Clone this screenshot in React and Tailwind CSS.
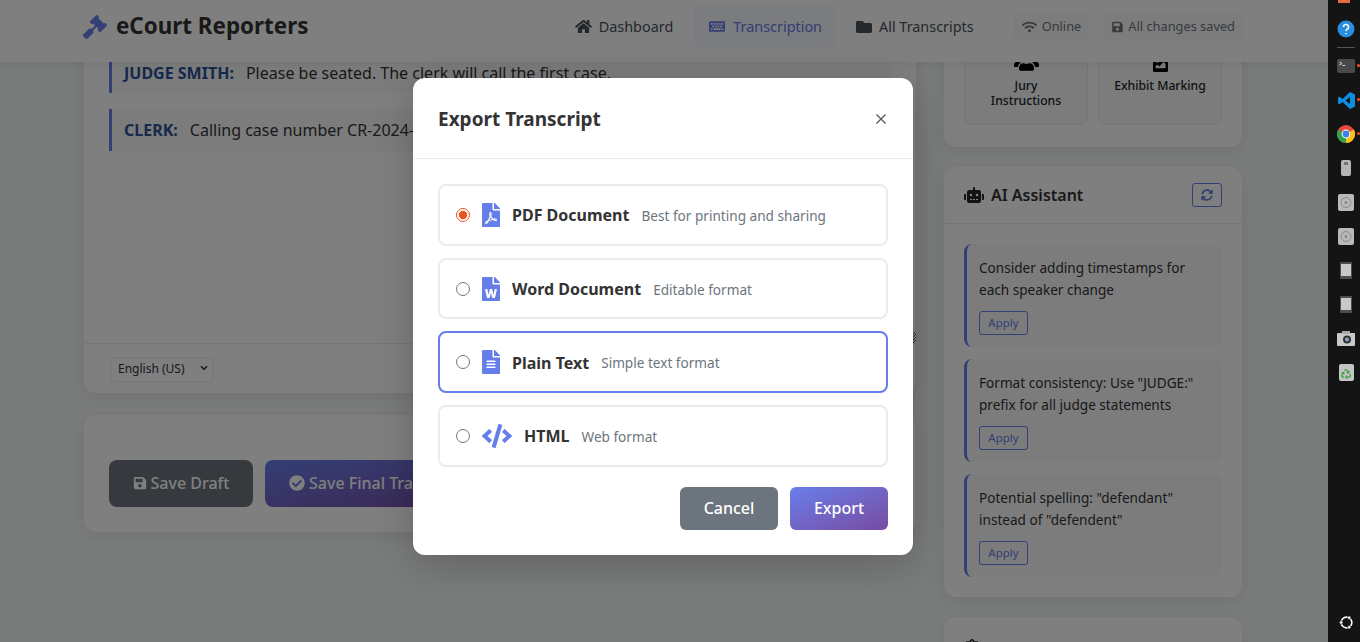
import {
  FaGavel, FaHome, FaKeyboard, FaFolder, FaWifi, FaSave, FaUsers, FaFileImage, FaRobot, FaSyncAlt,
  FaCheckCircle, FaFilePdf, FaFileWord, FaFileAlt, FaCode, FaClipboardCheck, FaRecycle,
} from 'react-icons/fa';

const suggestions = [
  ['Consider adding timestamps for', 'each speaker change'],
  ['Format consistency: Use "JUDGE:"', 'prefix for all judge statements'],
  ['Potential spelling: "defendant"', 'instead of "defendent"'],
];

const formats = [
  { id: 'pdf', icon: FaFilePdf, name: 'PDF Document', desc: 'Best for printing and sharing', checked: true },
  { id: 'word', icon: FaFileWord, name: 'Word Document', desc: 'Editable format' },
  { id: 'text', icon: FaFileAlt, name: 'Plain Text', desc: 'Simple text format', active: true },
  { id: 'html', icon: FaCode, name: 'HTML', desc: 'Web format', wide: true },
];

const Header = () => (
  <header className="relative z-10 h-[62px] shrink-0 bg-white shadow-[0_2px_10px_rgba(0,0,0,0.08)] pl-[83px] pr-[85px] pb-[9px] flex items-center">
    <FaGavel className="text-[#667eea] text-[24px] mr-[9px]" />
    <span className="text-[22.4px] leading-none font-bold text-[#333]">eCourt Reporters</span>
    <nav className="ml-auto flex items-center gap-[5px] text-[14.4px] text-[#495057]">
      <a className="h-[43px] px-[15px] mr-[1px] flex items-center gap-[7px] rounded-lg"><FaHome className="w-[17px] h-[15px]" />Dashboard</a>
      <a className="h-[43px] pl-[15px] pr-[14px] flex items-center gap-[8px] rounded-lg bg-[#667eea]/5 text-[#667eea]"><FaKeyboard className="w-[16px] h-[15px]" />Transcription</a>
      <a className="h-[43px] px-[15px] flex items-center gap-[7px] rounded-lg"><FaFolder className="w-[16px] h-[16px]" />All Transcripts</a>
    </nav>
    <div className="ml-[25px] flex items-center gap-[15px] text-[12.8px] text-[#6c757d]">
      <span className="h-[28px] px-[8px] flex items-center gap-[5px] rounded-md bg-[#f8f9fa]"><FaWifi className="w-[15px] h-[12px]" />Online</span>
      <span className="h-[28px] px-[8px] flex items-center gap-[5px] rounded-md bg-[#f8f9fa]"><FaSave className="w-[11px] h-[12px]" />All changes saved</span>
    </div>
  </header>
);

const EditorColumn = () => (
  <div className="w-[832px] flex flex-col gap-[22px]">
    <section className="relative bg-white rounded-xl shadow-[0_4px_16px_rgba(0,0,0,0.08)]">
      <div className="h-[321px] px-[25px] pt-[29px] flex flex-col gap-[16px] text-[16px] text-[#333]">
        <p className="h-[42px] pt-[1px] flex items-center gap-[12px] pl-[12px] border-l-[3px] border-[#667eea] bg-[#f8f9fa]">
          <b className="font-bold text-[#2a5298]">JUDGE SMITH:</b> Please be seated. The clerk will call the first case.
        </p>
        <p className="h-[42px] flex items-center gap-[12px] pl-[12px] border-l-[3px] border-[#667eea] bg-[#f8f9fa]">
          <b className="font-bold text-[#2a5298]">CLERK:</b> Calling case number CR-2024-0157.
        </p>
      </div>
      <svg className="absolute right-0 top-[310px]" width="4" height="12" viewBox="0 0 4 12">
        <path d="M0 3 3 0M0 6 4 2M0 9 4 5M0 12 4 8" stroke="#444" strokeWidth="1" />
      </svg>
      <div className="h-[50px] border-t border-[#e9ecef] px-[26px] pt-[11px]">
        <div className="relative w-[104px]">
          <select defaultValue="en" className="appearance-none w-[104px] h-[25px] px-[7px] text-[12px] text-[#333] bg-white border border-[#e9ecef] rounded">
            <option value="en">English (US)</option>
          </select>
          <svg className="absolute right-[6px] top-[10px]" width="8" height="6" viewBox="0 0 8 6">
            <path d="M1 1.200 4 4.200 7 1.200" fill="none" stroke="#333" strokeWidth="1.500" />
          </svg>
        </div>
      </div>
    </section>
    <section className="bg-white rounded-xl shadow-[0_4px_16px_rgba(0,0,0,0.08)] pt-[45px] pb-[25px] px-[25px] flex gap-[12px]">
      <button className="w-[144px] h-[47px] pb-[2px] flex items-center justify-center gap-[4px] rounded-lg bg-[#6c757d] text-white text-[16px] font-medium">
        <FaSave className="text-[14px]" />Save Draft
      </button>
      <button className="w-[240px] h-[47px] pb-[2px] pl-[24px] flex items-center gap-[4px] rounded-lg bg-gradient-to-br from-[#667eea] to-[#764ba2] text-white text-[16px] font-medium">
        <FaCheckCircle className="text-[16px]" />Save Final Transcript
      </button>
    </section>
  </div>
);

const SideColumn = () => (
  <div className="w-[298px] flex flex-col gap-[20px]">
    <section className="bg-white rounded-xl shadow-[0_4px_16px_rgba(0,0,0,0.08)] pt-[14px] pb-[22px] px-[20px] grid grid-cols-2 gap-[10px]">
      <div className="h-[89px] pt-[15px] px-[14px] flex flex-col items-center text-center bg-[#f8f9fa] border border-[#e9ecef] rounded-lg text-[12.2px] leading-[15px] font-medium text-[#212529]">
        <FaUsers className="w-[25px] h-[20px] mb-[6px] shrink-0 text-black" />
        Jury Instructions
      </div>
      <div className="h-[89px] pt-[15px] px-[14px] flex flex-col items-center text-center bg-[#f8f9fa] border border-[#e9ecef] rounded-lg text-[12.2px] leading-[15px] font-medium text-[#212529]">
        <FaFileImage className="w-[15px] h-[20px] mb-[6px] shrink-0 text-black" />
        Exhibit Marking
      </div>
    </section>
    <section className="bg-white rounded-xl shadow-[0_4px_16px_rgba(0,0,0,0.08)]">
      <div className="h-[57px] px-[20px] border-b border-[#e9ecef] flex items-center gap-[7px]">
        <FaRobot className="w-[20px] h-[16px] text-[#212529]" />
        <h3 className="text-[16px] font-semibold text-[#333]">AI Assistant</h3>
        <button className="ml-auto w-[30px] h-[24px] flex items-center justify-center border border-[#667eea] rounded-[3px] text-[#667eea]">
          <FaSyncAlt className="text-[12px]" />
        </button>
      </div>
      <div className="pt-[20px] pb-[20px] px-[20px] flex flex-col gap-[12px]">
        {suggestions.map((lines) => (
          <div key={lines[0]} className="h-[103px] pl-[12px] pt-[13px] border-l-[3px] border-[#667eea] rounded-lg bg-[#f8f9fa] text-[13.6px] leading-[22px] text-[#333]">
            <p>{lines[0]}</p>
            <p>{lines[1]}</p>
            <button className="mt-[10px] w-[49px] h-[24px] block border border-[#667eea] rounded-[3px] text-[11.5px] leading-none text-[#667eea]">Apply</button>
          </div>
        ))}
      </div>
    </section>
    <section className="bg-white rounded-xl shadow-[0_4px_16px_rgba(0,0,0,0.08)]">
      <div className="h-[57px] pt-[4px] pl-[21px] pr-[20px] flex items-center gap-[12px]">
        <FaClipboardCheck className="w-[14px] h-[18px] text-[#212529]" />
        <h3 className="text-[16px] font-semibold text-[#333]">Document Quality</h3>
      </div>
    </section>
  </div>
);

const ExportModal = () => (
  <div className="absolute inset-0 z-20 bg-black/50 flex justify-center pt-[78px] pr-[2px]">
    <div className="w-[500px] h-[477px] bg-white rounded-xl shadow-[0_10px_40px_rgba(0,0,0,0.2)]">
      <div className="h-[81px] pt-[2px] px-[25px] border-b border-[#e9ecef] flex items-center justify-between">
        <h2 className="text-[19px] font-bold text-[#333]">Export Transcript</h2>
        <svg className="mr-[2px]" width="10" height="10" viewBox="0 0 10 10">
          <path d="M0.5 0.5 9.5 9.500M9.500 0.5 0.5 9.500" stroke="#555" strokeWidth="1.3" />
        </svg>
      </div>
      <div className="px-[25px] pt-[25.2px] pb-[25px]">
        <div className="flex flex-col gap-[12px]">
          {formats.map(({ id, icon: Icon, name, desc, checked, active, wide }) => (
            <label key={id} className={`h-[61.6px] pl-[16px] flex items-center rounded-lg border-2 ${active ? 'border-[#667eea]' : 'border-[#e9ecef]'}`}>
              <input type="radio" name="format" defaultChecked={checked} className="w-[14px] h-[14px] m-0 accent-[#e95420]" />
              <Icon className={`ml-[12px] h-[24px] text-[#667eea] shrink-0 ${wide ? 'w-[30px]' : 'w-[18px]'}`} />
              <span className="ml-[12px] pt-[1px] text-[16px] font-bold text-[#333]">{name}</span>
              <span className="ml-[12px] text-[13.6px] text-[#6c757d] pt-[3px]">{desc}</span>
            </label>
          ))}
        </div>
        <div className="mt-[20px] flex justify-end gap-[12px]">
          <button className="w-[98px] h-[43px] rounded-md bg-[#6c757d] text-white text-[16px] font-medium">Cancel</button>
          <button className="w-[98px] h-[43px] rounded-md bg-gradient-to-br from-[#667eea] to-[#764ba2] text-white text-[16px] font-medium">Export</button>
        </div>
      </div>
    </div>
  </div>
);

const DockItem = ({ children, dot }) => (
  <div className="relative h-[34px] flex items-center justify-center shrink-0">
    {children}
    {dot && <span className="absolute right-0 top-[15px] w-[3px] h-[3px] rounded-full bg-[#e95420]" />}
  </div>
);

const Disk = () => (
  <svg width="16" height="17" viewBox="0 0 16 17">
    <rect width="16" height="17" rx="2" fill="#b9b9b9" />
    <circle cx="8" cy="8.5" r="5" fill="none" stroke="#8a8a8a" />
    <circle cx="8" cy="8.5" r="1.5" fill="#8a8a8a" />
  </svg>
);

const Tablet = () => (
  <svg width="12" height="17" viewBox="0 0 12 17">
    <rect width="12" height="17" rx="1" fill="#4d4d4d" />
    <rect x="1" y="2" width="10" height="12" fill="#c8c8c8" />
  </svg>
);

const Dock = () => (
  <aside className="w-[32px] h-full bg-[#141414] flex flex-col relative z-30 pl-[4px] shrink-0">
    <div className="h-[3px] w-[12px] ml-[6px] bg-[#e2703a] mb-[9px]" />
    <DockItem>
      <svg width="18" height="18" viewBox="0 0 18 18">
        <circle cx="9" cy="9" r="8.5" fill="#2a8ee0" />
        <path d="M6.5 7a2.5 2.5 0 1 1 3.6 2.2c-.8.4-1.1.9-1.1 1.8M9 13v1.2" fill="none" stroke="#fff" strokeWidth="1.5" />
      </svg>
    </DockItem>
    <div className="h-px w-[18px] mx-auto mt-[1px] mb-[1px] bg-[#555] shrink-0" />
    <DockItem dot>
      <svg width="18" height="14" viewBox="0 0 18 14">
        <rect width="18" height="14" rx="2" fill="#4a4a4a" />
        <path d="M2.5 3 5 4.5 2.5 6M5.5 6.5H8" fill="none" stroke="#fff" strokeWidth="0.8" />
      </svg>
    </DockItem>
    <DockItem dot>
      <svg width="17" height="17" viewBox="0 0 17 17">
        <path d="M12 0 17 2.400V14.600L12 17 4.500 10 1.500 12.300 0 11.500V5.500L1.500 4.700 4.500 7ZM12 5 7.500 8.500 12 12Z" fill="#0d8de0" />
      </svg>
    </DockItem>
    <DockItem dot>
      <svg width="18" height="18" viewBox="0 0 18 18">
        <circle cx="9" cy="9" r="9" fill="#e2483b" />
        <path d="M9 9 1.2 4.5A9 9 0 0 0 9 18Z" fill="#2fa14f" />
        <path d="M9 9 9 18A9 9 0 0 0 16.8 4.5Z" fill="#fbc116" />
        <circle cx="9" cy="9" r="4.4" fill="#fff" />
        <circle cx="9" cy="9" r="3.4" fill="#3b82e8" />
      </svg>
    </DockItem>
    <DockItem>
      <svg width="10" height="16" viewBox="0 0 10 16">
        <rect width="10" height="16" rx="2" fill="#b5b5b5" />
        <rect x="3" y="2" width="4" height="3" fill="#777" />
      </svg>
    </DockItem>
    <DockItem><Disk /></DockItem>
    <DockItem><Disk /></DockItem>
    <DockItem><Tablet /></DockItem>
    <DockItem><Tablet /></DockItem>
    <DockItem>
      <svg width="18" height="15" viewBox="0 0 18 15">
        <rect y="2" width="18" height="13" rx="1" fill="#c9c9c9" />
        <rect x="5" width="8" height="3" fill="#aaa" />
        <circle cx="10" cy="8.5" r="4" fill="#333" />
        <circle cx="10" cy="8.5" r="2" fill="#8fa3c4" />
      </svg>
    </DockItem>
    <DockItem>
      <div className="w-[15px] h-[17px] rounded-[2px] bg-[#c4c4c4] flex items-center justify-center pt-[3px]">
        <FaRecycle className="text-[10px] text-[#3ba13b]" />
      </div>
    </DockItem>
    <div className="mt-auto mb-[12px] h-[16px] flex items-center justify-center">
      <svg width="15" height="15" viewBox="0 0 14 14">
        <circle cx="7" cy="7" r="5" fill="none" stroke="#fff" strokeWidth="1.5" />
        <circle cx="2" cy="7" r="1.6" fill="#fff" stroke="#141414" strokeWidth="0.6" />
        <circle cx="9.500" cy="2.600" r="1.6" fill="#fff" stroke="#141414" strokeWidth="0.6" />
        <circle cx="9.500" cy="11.400" r="1.6" fill="#fff" stroke="#141414" strokeWidth="0.6" />
      </svg>
    </div>
  </aside>
);

const App = () => (
  <div className="h-screen overflow-hidden flex font-['Noto_Sans',sans-serif]">
    <div className="relative flex-1 min-w-0 flex flex-col bg-[#f4f6f6]">
      <Header />
      <div className="flex-1 overflow-hidden">
        <main className="-mt-[40px] pl-[84px] flex gap-[28px] items-start">
          <EditorColumn />
          <SideColumn />
        </main>
      </div>
      <ExportModal />
    </div>
    <Dock />
  </div>
);

export default App;
